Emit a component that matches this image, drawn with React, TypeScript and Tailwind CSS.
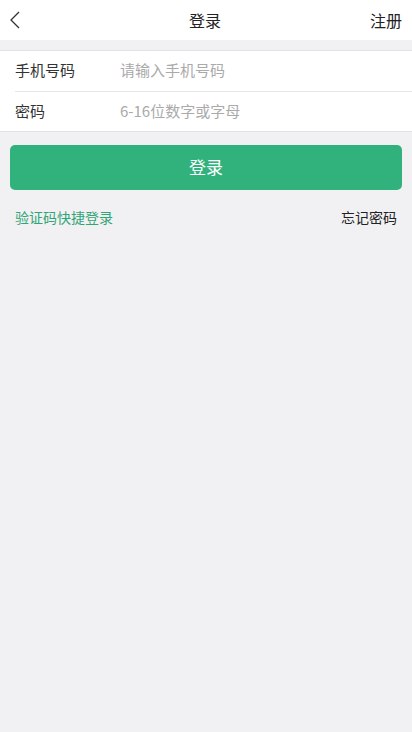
const font = {fontFamily: '"Noto Sans CJK SC", "Liberation Sans", sans-serif'};

export default function App() {
  return (
    <div className="flex h-[732px] w-[412px] flex-col bg-[#f1f1f4]" style={font}>
      <div className="grid h-10 grid-cols-3 items-center bg-white pl-2 pr-[10px]">
        <svg width="14" height="20" viewBox="0 0 14 20" fill="none" stroke="#333" strokeWidth="1.3">
          <path d="M11 2 L3 10 L11 18" />
        </svg>
        <div className="text-center text-[16px] leading-none text-[#222]">登录</div>
        <div className="text-right text-[16px] leading-none text-[#222]">注册</div>
      </div>
      <div className="mt-[10px] border-y border-[#e2e2e6] bg-white">
        <div className="ml-[15px] flex h-[41px] items-center border-b border-[#e6e6e6] pb-[2px]">
          <div className="w-[105px] text-[15px] text-[#333]">手机号码</div>
          <div className="text-[15px] text-[#aaa]">请输入手机号码</div>
        </div>
        <div className="ml-[15px] flex h-[39px] items-center">
          <div className="w-[105px] text-[15px] text-[#333]">密码</div>
          <div className="text-[15px] text-[#aaa]">6-16位数字或字母</div>
        </div>
      </div>
      <div className="mx-[10px] mt-[13px] flex h-[45px] items-center justify-center rounded-[5px] bg-[#31b27c] pb-[2px] text-[17px] text-white">
        登录
      </div>
      <div className="mt-[17px] flex items-center justify-between px-[15px]">
        <div className="text-[14px] text-[#31a575]">验证码快捷登录</div>
        <div className="text-[14px] text-[#222]">忘记密码</div>
      </div>
    </div>
  );
}
